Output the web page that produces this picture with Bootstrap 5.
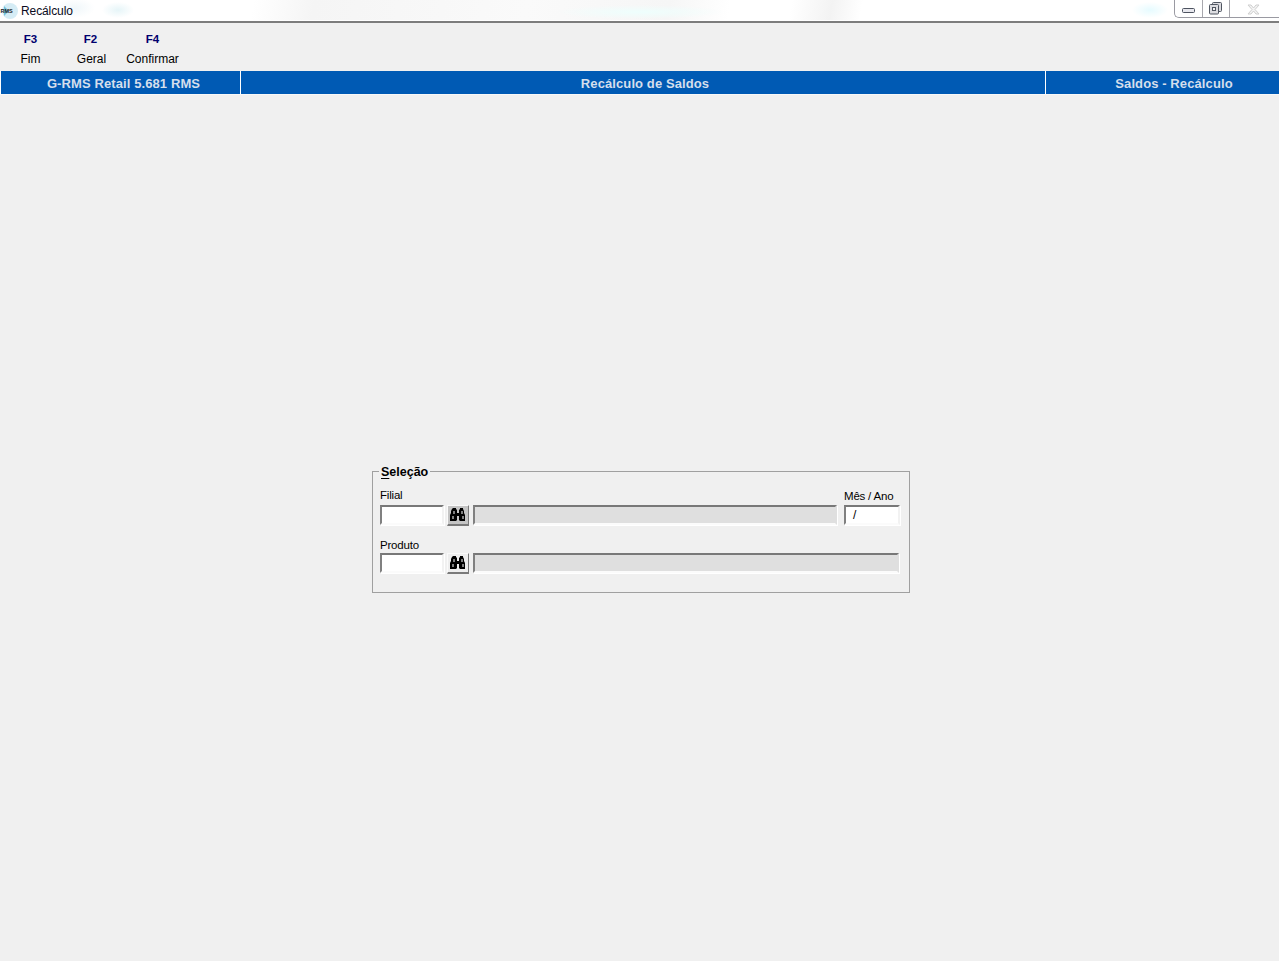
<!DOCTYPE html>
<html lang="pt">
<head>
<meta charset="utf-8">
<title>Recálculo</title>
<link href="https://cdn.jsdelivr.net/npm/bootstrap@5.3.0/dist/css/bootstrap.min.css" rel="stylesheet">
<style>
html,body{height:100%}
body{background:#f0f0f0;font-family:"Liberation Sans",Arial,sans-serif;font-size:12px;color:#000;overflow:hidden;line-height:1}
.app-shell{height:961px}
.win-title{height:23px;flex:none;border-bottom:2px solid #7d7d7d;box-shadow:inset 0 -1px 0 #fff;
 background:
 radial-gradient(ellipse 85px 7px at 640px 12px,#eefffd 0,#eefffd00 100%),
 radial-gradient(ellipse 18px 8px at 1150px 10px,#e6fbff 0,#e6fbff00 100%),
 radial-gradient(ellipse 16px 8px at 118px 10px,#e6f5f8 0,#e6f5f800 100%),
 radial-gradient(ellipse 20px 10px at 75px 8px,#f0f7fa 0,#f0f7fa00 100%),
 linear-gradient(100deg,#fff 0,#fff 250px,#f5f5f5 310px,#fafafa 520px,#f6f6f6 660px,#fff 720px,#fff 780px,#f3f3f3 820px,#fff 850px,#fff 100%);
 position:relative}
.title-logo{width:18px;height:21px;flex:none}
.title-text{font-size:12px;color:#0a0a20;margin-left:3px;padding-top:1px;letter-spacing:-.1px}
.caption-btns{position:absolute;right:0;top:0;width:105px;height:18px;border:1px solid #9a9aa2;border-top:0;border-right:0;border-radius:0 0 0 5px}
.caption-btn{height:17px;width:28px;border-right:1px solid #a8a8ae;flex:none}
.caption-btn.wide{width:27px}
.caption-btn:last-child{border:0;flex:1}
.btn-min{padding-top:4px}
.btn-max{padding-top:2px;padding-right:2px}
.btn-close-x{padding-top:1px;padding-right:2px}
.tool-strip{height:48px;flex:none;background:#f0f0f0;padding-top:11px}
.tool-item{width:61px;text-align:center;flex:none}
.tool-key{color:#00006e;font-weight:700;font-size:11.5px;height:12px}
.tool-key.nudge{padding-right:2px}
.tool-label{font-size:12px;margin-top:7px;height:14px;white-space:nowrap}
.info-bar{height:24px;flex:none;background:#005ab4;color:#d5dfec;font-weight:700;font-size:13px;border-bottom:1px solid #f8f8f8}
.info-cell{display:flex;align-items:center;justify-content:center;border-right:1px solid #fff;height:23px;padding-top:1px;letter-spacing:.1px}
.info-a{width:241px;border-left:1px solid #fff;padding-left:6px}
.info-b{width:805px;padding-left:4px}
.info-c{flex:1;border-right:0;padding-left:23px;justify-content:center}
.stage{flex:1;padding-top:376px;padding-left:372px}
.sel-box{width:538px;height:122px;border:1px solid #a0a0a0;background:#f0f0f0;padding:0 9px 0 7px;position:relative}
.sel-legend{position:absolute;left:6px;top:-7px;background:#f0f0f0;padding:0 2px;font-weight:700;font-size:12.5px;line-height:14px}
.sel-legend u{text-underline-offset:2px}
.field-row.first{margin-top:17px;height:36px}
.field-row.second{margin-top:14px;height:30px}
.cap{font-size:11.5px;line-height:13px;height:13px;letter-spacing:-.2px}
.sunk{height:20px;border:2px solid;border-color:#787878 #f2f2f2 #fbfbfb #808080;background:#fff;font-size:12px;display:block;box-shadow:1px 1px 0 #fff}
.sunk.off{background:#dfdfdf;border-color:#787878 #dfdfdf #fbfbfb #808080}
.code{width:64px}
.find{width:22px;height:21px;margin:0 4px 0 3px;border:1px solid;border-color:#fafafa #7a7a7a #7a7a7a #fafafa;border-bottom-width:2px;background:#eeeeee;display:flex;align-items:center;justify-content:center;padding:0;flex:none}
.find.pressed{background:#c4c4c4}
.desc1{width:364px}
.desc2{width:426px}
.mes{width:56px;padding-left:7px;padding-top:1px;line-height:14px}
.col-mes{margin-left:7px;width:56px}
.mes-cap{margin-top:1px}
.gap-filial{height:3px}
.gap-mes{height:2px}
.gap-prod{height:1px}
</style>
</head>
<body>
<div class="app-shell d-flex flex-column">
  <div class="win-title d-flex align-items-center">
    <svg class="title-logo" viewBox="0 0 18 21"><ellipse cx="10" cy="11" rx="8" ry="8" fill="#d5ecf5"/><path d="M4 6l5 5-5 5z" fill="#74c2dc"/><text x="0.500" y="13" font-family="Liberation Sans" font-size="5.500" font-weight="700" fill="#222">RMS</text></svg>
    <span class="title-text">Recálculo</span>
    <div class="caption-btns d-flex">
      <div class="caption-btn btn-min d-flex align-items-center justify-content-center"><svg width="14" height="7" viewBox="0 0 14 7"><rect x=".5" y="1.500" width="12" height="4" rx="1" fill="#e8e8ee" stroke="#4d5360"/></svg></div>
      <div class="caption-btn btn-max wide d-flex align-items-start justify-content-center"><svg width="13" height="13" viewBox="0 0 13 13"><rect x="3.500" y=".5" width="9" height="9" rx="1" fill="#dcdce0" stroke="#4f5560"/><rect x=".5" y="2.500" width="9" height="9.500" rx="1" fill="#dcdce0" stroke="#4f5560"/><rect x="3.500" y="5.500" width="3" height="3" fill="#f4f4f4" stroke="#4f5560"/></svg></div>
      <div class="caption-btn btn-close-x d-flex align-items-center justify-content-center"><svg width="13" height="11" viewBox="0 0 13 11"><path d="M1 1h3l2.500 3 2.500-3h3l-4 4.500 4 4.500h-3l-2.500-3-2.500 3h-3l4-4.500z" fill="#f4f4f4" stroke="#cfcfcf"/></svg></div>
    </div>
  </div>
  <div class="tool-strip d-flex">
    <div class="tool-item"><div class="tool-key">F3</div><div class="tool-label">Fim</div></div>
    <div class="tool-item"><div class="tool-key nudge">F2</div><div class="tool-label">Geral</div></div>
    <div class="tool-item"><div class="tool-key">F4</div><div class="tool-label">Confirmar</div></div>
  </div>
  <div class="info-bar d-flex">
    <div class="info-cell info-a">G-RMS Retail 5.681 RMS</div>
    <div class="info-cell info-b">Recálculo de Saldos</div>
    <div class="info-cell info-c">Saldos - Recálculo</div>
  </div>
  <div class="stage">
    <div class="sel-box">
      <div class="sel-legend"><u>S</u>eleção</div>
      <div class="field-row first d-flex">
        <div class="flex-none">
          <div class="cap">Filial</div>
          <div class="gap-filial"></div>
          <div class="d-flex">
            <span class="sunk code"></span>
            <button class="find pressed" type="button" aria-label="Pesquisar filial"><svg width="16" height="16" viewBox="0 0 16 16"><path d="M3 1h3v1l1 1v3h2V3l1-1V1h3v1l1 2v2l1 2v6H10l-1-1V9H7v4l-1 1H0V8l1-2V4l1-2z" fill="#000"/><path d="M4 4v3M3 9v3M12 4v3M13 9v3" stroke="#fff"/></svg></button>
            <span class="sunk off desc1"></span>
          </div>
        </div>
        <div class="col-mes">
          <div class="cap mes-cap">Mês / Ano</div>
          <div class="gap-mes"></div>
          <span class="sunk mes">/</span>
        </div>
      </div>
      <div class="field-row second">
        <div class="cap">Produto</div>
        <div class="gap-prod"></div>
        <div class="d-flex">
          <span class="sunk code"></span>
          <button class="find" type="button" aria-label="Pesquisar produto"><svg width="16" height="16" viewBox="0 0 16 16"><path d="M3 1h3v1l1 1v3h2V3l1-1V1h3v1l1 2v2l1 2v6H10l-1-1V9H7v4l-1 1H0V8l1-2V4l1-2z" fill="#000"/><path d="M4 4v3M3 9v3M12 4v3M13 9v3" stroke="#fff"/></svg></button>
          <span class="sunk off desc2"></span>
        </div>
      </div>
    </div>
  </div>
</div>
<script src="https://cdn.jsdelivr.net/npm/bootstrap@5.3.0/dist/js/bootstrap.bundle.min.js"></script>
</body>
</html>
